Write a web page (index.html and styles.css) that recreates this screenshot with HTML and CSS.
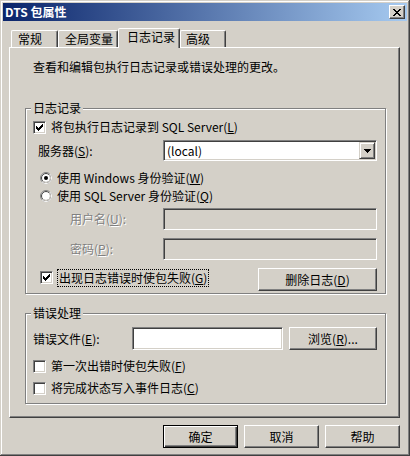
FILE: index.html
```html
<!DOCTYPE html>
<html lang="zh-CN">
<head>
    <meta charset="UTF-8">
    <title>DTS 包属性</title>
    <link rel="stylesheet" href="styles.css">
</head>
<body>
    <div class="window">
        <div class="titlebar">
            <span class="title">DTS 包属性</span>
            <button class="close">
                <svg width="8" height="7" viewBox="0 0 8 7"><path d="M0 0h2v1h-2zM6 0h2v1h-2zM1 1h2v1h-2zM5 1h2v1h-2zM2 2h4v1h-4zM3 3h2v1h-2zM2 4h4v1h-4zM1 5h2v1h-2zM5 5h2v1h-2zM0 6h2v1h-2zM6 6h2v1h-2z" fill="#000"/></svg>
            </button>
        </div>

        <div class="body">
            <div class="tabs">
                <div class="tab tab-general">常规</div>
                <div class="tab tab-globals">全局变量</div>
                <div class="tab tab-logging active">日志记录</div>
                <div class="tab tab-advanced">高级</div>
            </div>

            <div class="panel">
                <p class="desc">查看和编辑包执行日志记录或错误处理的更改。</p>

                <div class="group group-log">
                    <div class="group-title">日志记录</div>

                    <div class="row row-a">
                        <label class="check">
                            <span class="box"><svg width="11" height="11" viewBox="0 0 11 11"><path d="M8 2h1v1h-1zM7 3h2v1h-2zM2 4h1v1h-1zM6 4h3v1h-3zM2 5h2v1h-2zM5 5h3v1h-3zM2 6h5v1h-5zM3 7h3v1h-3zM4 8h1v1h-1z" fill="#000"/></svg></span>
                            <span>将包执行日志记录到 SQL Server(<u>L</u>)</span>
                        </label>
                    </div>

                    <div class="row row-b">
                        <span class="server-label">服务器(<u>S</u>):</span>
                        <div class="combo">
                            <span class="combo-value">(local)</span>
                            <span class="combo-btn">
                                <svg width="7" height="4" viewBox="0 0 7 4"><path d="M0 0h7v1h-7zM1 1h5v1h-5zM2 2h3v1h-3zM3 3h1v1h-1z" fill="#000"/></svg>
                            </span>
                        </div>
                    </div>

                    <div class="row row-c">
                        <label class="radio">
                            <svg width="12" height="12" viewBox="0 0 12 12">
                                <circle cx="6" cy="6" r="5.5" fill="#fff" stroke="#808080"/>
                                <path d="M2.1 9.9 A5.5 5.5 0 0 0 9.9 2.1" fill="none" stroke="#fff"/>
                                <circle cx="6" cy="6" r="4.5" fill="#fff" stroke="#404040"/>
                                <path d="M2.8 9.2 A4.5 4.5 0 0 0 9.2 2.8" fill="none" stroke="#d4d0c8"/>
                                <circle cx="6" cy="6" r="2" fill="#000"/>
                            </svg>
                            <span>使用 Windows 身份验证(<u>W</u>)</span>
                        </label>
                    </div>

                    <div class="row row-d">
                        <label class="radio">
                            <svg width="12" height="12" viewBox="0 0 12 12">
                                <circle cx="6" cy="6" r="5.5" fill="#fff" stroke="#808080"/>
                                <path d="M2.1 9.9 A5.5 5.5 0 0 0 9.9 2.1" fill="none" stroke="#fff"/>
                                <circle cx="6" cy="6" r="4.5" fill="#fff" stroke="#404040"/>
                                <path d="M2.8 9.2 A4.5 4.5 0 0 0 9.2 2.8" fill="none" stroke="#d4d0c8"/>
                            </svg>
                            <span>使用 SQL Server 身份验证(<u>Q</u>)</span>
                        </label>
                    </div>

                    <div class="row row-e">
                        <span class="disabled indent">用户名(<u>U</u>):</span>
                        <div class="field field-wide disabled-field"></div>
                    </div>

                    <div class="row row-f">
                        <span class="disabled indent">密码(<u>P</u>):</span>
                        <div class="field field-wide disabled-field"></div>
                    </div>

                    <div class="row row-g">
                        <label class="check check-fail">
                            <span class="box"><svg width="11" height="11" viewBox="0 0 11 11"><path d="M8 2h1v1h-1zM7 3h2v1h-2zM2 4h1v1h-1zM6 4h3v1h-3zM2 5h2v1h-2zM5 5h3v1h-3zM2 6h5v1h-5zM3 7h3v1h-3zM4 8h1v1h-1z" fill="#000"/></svg></span>
                            <span class="focus">出现日志错误时使包失败(<u>G</u>)</span>
                        </label>
                        <button class="btn btn-delete">删除日志(<u>D</u>)</button>
                    </div>
                </div>

                <div class="group group-err">
                    <div class="group-title">错误处理</div>

                    <div class="row row-h">
                        <span class="file-label">错误文件(<u>E</u>):</span>
                        <div class="field field-file"></div>
                        <button class="btn btn-browse">浏览(<u>R</u>)...</button>
                    </div>

                    <div class="row row-i">
                        <label class="check">
                            <span class="box"></span>
                            <span>第一次出错时使包失败(<u>F</u>)</span>
                        </label>
                    </div>

                    <div class="row row-j">
                        <label class="check">
                            <span class="box"></span>
                            <span>将完成状态写入事件日志(<u>C</u>)</span>
                        </label>
                    </div>
                </div>
            </div>

            <div class="actions">
                <button class="btn btn-action btn-default">确定</button>
                <button class="btn btn-action">取消</button>
                <button class="btn btn-action">帮助</button>
            </div>
        </div>
    </div>
</body>
</html>
```

FILE: styles.css
```css
body {
    margin: 0;
    font-family: "Noto Sans CJK SC", "Liberation Sans", sans-serif;
    font-size: 12px;
    color: #000;
    background-color: #d4d0c8;
}

.window {
    width: 410px;
    height: 456px;
    box-sizing: border-box;
    padding: 3px;
    background-color: #d4d0c8;
    box-shadow: inset -1px -1px #404040, inset 1px 1px #d4d0c8, inset -2px -2px #808080, inset 2px 2px #fff;
    display: flex;
    flex-direction: column;
}

/* Title bar */
.titlebar {
    height: 18px;
    display: flex;
    align-items: center;
    padding: 0 2px;
    background: linear-gradient(to right, #0a246a, #a6caf0);
}

.title {
    flex: 1;
    color: #fff;
    font-weight: bold;
    line-height: 18px;
}

.close {
    width: 16px;
    height: 14px;
    padding: 0;
    box-sizing: border-box;
    border: 1px solid;
    border-color: #fff #404040 #404040 #fff;
    box-shadow: inset -1px -1px #808080;
    background-color: #d4d0c8;
    display: flex;
    align-items: center;
    justify-content: center;
}

.close svg {
    display: block;
}

.body {
    padding: 7px 7px 0 6px;
}

/* Tabs */
.tabs {
    display: flex;
    align-items: flex-end;
    height: 19px;
    padding-left: 2px;
}

.tab {
    height: 17px;
    box-sizing: border-box;
    border: 1px solid;
    border-bottom: none;
    border-color: #fff #404040 transparent #fff;
    border-radius: 2px 2px 0 0;
    box-shadow: inset -1px 0 #808080;
    padding-left: 6px;
    line-height: 16px;
    white-space: nowrap;
}

.tab-general { width: 47px; }
.tab-globals { width: 60px; }
.tab-advanced { width: 46px; padding-left: 5px; }

.tab.active {
    width: 62px;
    height: 20px;
    margin-bottom: -1px;
    padding-left: 8px;
    position: relative;
    z-index: 1;
    background-color: #d4d0c8;
}

.panel {
    height: 371px;
    box-sizing: border-box;
    border: 1px solid;
    border-color: #fff #404040 #404040 #fff;
    box-shadow: inset -1px -1px #808080;
    padding-left: 15px;
}

.desc {
    margin: 12px 0 0 8px;
    height: 14px;
    line-height: 14px;
}

/* Group boxes */
.group {
    width: 361px;
    box-sizing: border-box;
    border: 1px solid #808080;
    box-shadow: inset 1px 1px #fff, 1px 1px #fff;
    padding: 0 8px 2px 7px;
}

.group-log {
    margin-top: 34px;
}

.group-err {
    margin-top: 19px;
    padding-bottom: 6px;
}

.group-title {
    width: max-content;
    margin: -8px 0 0 -2px;
    padding: 0 2px;
    line-height: 14px;
    background-color: #d4d0c8;
}

.row {
    display: flex;
    align-items: center;
    line-height: 14px;
}

.row-a { height: 18px; margin-top: 3px; }
.row-b { height: 21px; margin-top: 4px; }
.row-c { height: 18px; margin-top: 8px; }
.row-d { height: 18px; }
.row-e { height: 22px; margin-top: 3px; }
.row-f { height: 22px; margin-top: 8px; }
.row-g { height: 23px; margin-top: 8px; }
.row-h { height: 23px; margin-top: 7px; }
.row-i { height: 18px; margin-top: 7px; }
.row-j { height: 18px; margin-top: 4px; }

/* Checkboxes and radios */
.check {
    display: flex;
    align-items: center;
    gap: 5px;
}

.box {
    width: 13px;
    height: 13px;
    box-sizing: border-box;
    border: 1px solid;
    border-color: #808080 #fff #fff #808080;
    box-shadow: inset 1px 1px #404040, inset -1px -1px #d4d0c8;
    background-color: #fff;
}

.box svg {
    display: block;
}

.radio {
    display: flex;
    align-items: center;
    gap: 5px;
    margin-left: 7px;
}

.radio svg {
    display: block;
}

.check-fail {
    margin-left: 7px;
    margin-bottom: 4px;
}

.focus {
    outline: 1px dotted #000;
    outline-offset: 0;
    padding: 1px 1px;
}

.server-label {
    margin-left: 5px;
}

.combo {
    width: 214px;
    height: 21px;
    margin-left: auto;
    box-sizing: border-box;
    border: 1px solid;
    border-color: #808080 #fff #fff #808080;
    box-shadow: inset 1px 1px #404040, inset -1px -1px #d4d0c8;
    background-color: #fff;
    padding: 1px;
    display: flex;
    align-items: center;
}

.combo-value {
    flex: 1;
    padding-left: 2px;
}

.combo-btn {
    width: 16px;
    height: 17px;
    box-sizing: border-box;
    border: 1px solid;
    border-color: #d4d0c8 #404040 #404040 #d4d0c8;
    box-shadow: inset 1px 1px #fff, inset -1px -1px #808080;
    background-color: #d4d0c8;
    display: flex;
    align-items: center;
    justify-content: center;
}

.combo-btn svg {
    display: block;
}

/* Text fields */
.field {
    box-sizing: border-box;
    border: 1px solid;
    border-color: #808080 #fff #fff #808080;
    box-shadow: inset 1px 1px #404040, inset -1px -1px #d4d0c8;
    background-color: #fff;
}

.field-wide {
    width: 214px;
    height: 22px;
    margin-left: auto;
}

.disabled-field {
    background-color: #d4d0c8;
}

.field-file {
    width: 151px;
    height: 23px;
}

.disabled {
    color: #808080;
    text-shadow: 1px 1px #fff;
}

.indent {
    margin-left: 37px;
}

.file-label {
    width: 99px;
}

/* Buttons */
.btn {
    height: 23px;
    box-sizing: border-box;
    padding: 0;
    border: 1px solid;
    border-color: #fff #404040 #404040 #fff;
    box-shadow: inset -1px -1px #808080;
    background-color: #d4d0c8;
    font-family: inherit;
    font-size: 12px;
    color: #000;
    line-height: 14px;
}

.btn-delete {
    width: 119px;
    margin-left: auto;
}

.btn-browse {
    width: 88px;
    margin-left: 6px;
}

.actions {
    display: flex;
    justify-content: flex-end;
    gap: 6px;
    margin-top: 7px;
}

.btn-action {
    width: 75px;
}

.btn-default {
    border-color: #000;
    box-shadow: inset 1px 1px #fff, inset -1px -1px #404040, inset -2px -2px #808080;
}
```
